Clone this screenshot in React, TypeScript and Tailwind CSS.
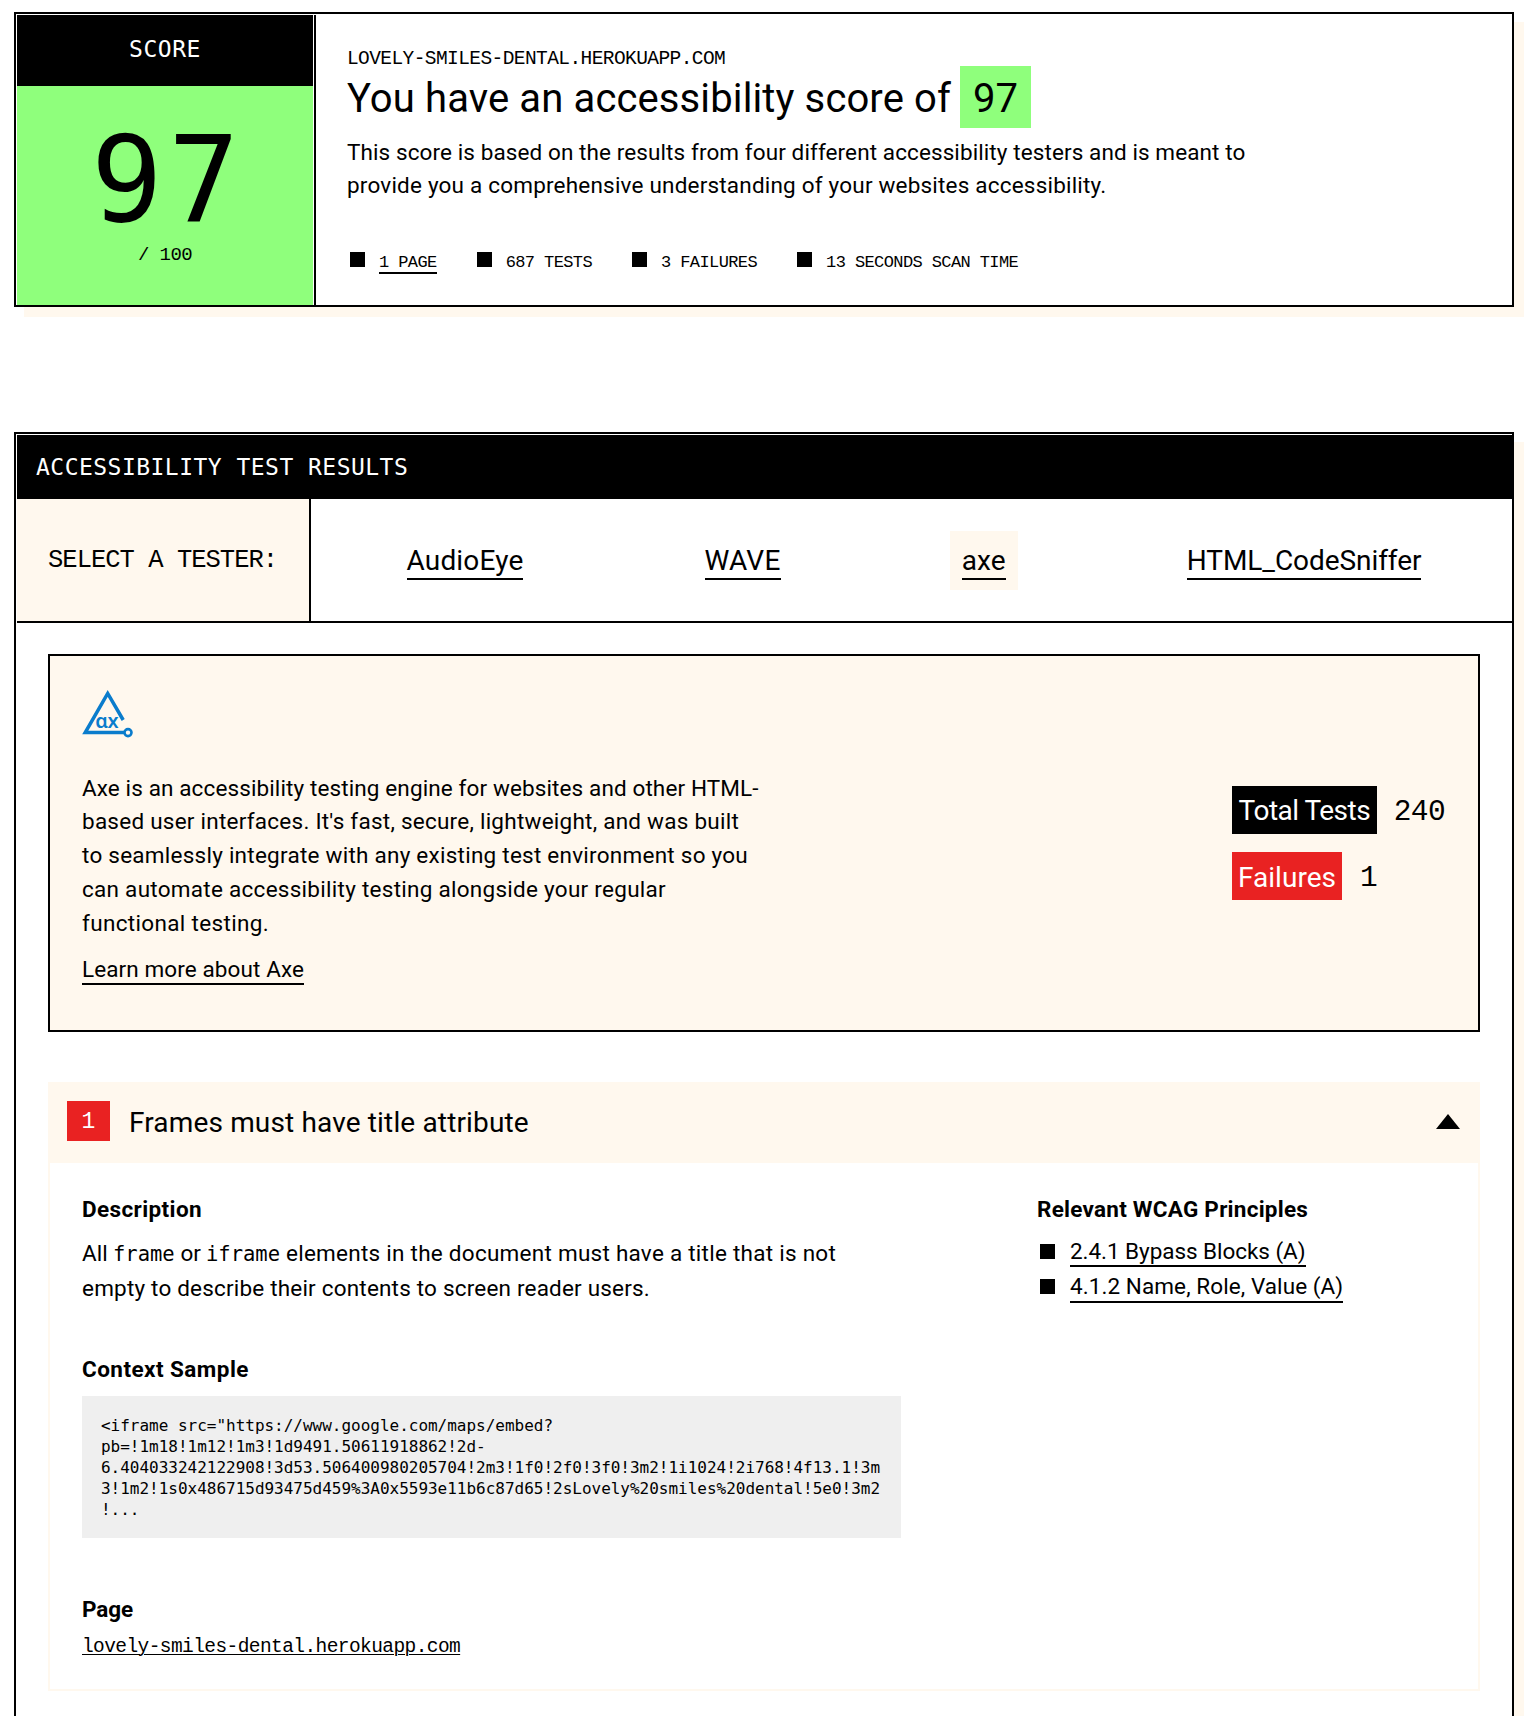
import type { ReactNode } from 'react'

const sans = "font-['Roboto','Liberation_Sans',sans-serif]"
const mono = "font-['Liberation_Mono',monospace]"
const monoStrong = "font-['DejaVu_Sans_Mono',monospace]"

const stats = ['1 PAGE', '687 TESTS', '3 FAILURES', '13 SECONDS SCAN TIME']

const testers = [
  { name: 'AudioEye', cls: 'tracking-[0.15px]' },
  { name: 'WAVE', cls: 'tracking-[0.23px]' },
  { name: 'axe', cls: 'tracking-[0.1px]', active: true },
  { name: 'HTML_CodeSniffer', cls: 'tracking-[-0.07px]' },
]

const about = [
  { text: 'Axe is an accessibility testing engine for websites and other HTML-', cls: 'tracking-[0.12px]' },
  { text: "based user interfaces. It's fast, secure, lightweight, and was built", cls: 'tracking-[0.247px]' },
  { text: 'to seamlessly integrate with any existing test environment so you', cls: 'tracking-[0.25px]' },
  { text: 'can automate accessibility testing alongside your regular', cls: 'tracking-[0.273px]' },
  { text: 'functional testing.', cls: 'tracking-[0.34px]' },
]

const codeLines = [
  '<iframe src="https://www.google.com/maps/embed?',
  'pb=!1m18!1m12!1m3!1d9491.50611918862!2d-',
  '6.404033242122908!3d53.506400980205704!2m3!1f0!2f0!3f0!3m2!1i1024!2i768!4f13.1!3m',
  '3!1m2!1s0x486715d93475d459%3A0x5593e11b6c87d65!2sLovely%20smiles%20dental!5e0!3m2',
  '!...',
]

function AxeLogo() {
  return (
    <svg width="52" height="50" viewBox="0 0 52 50" fill="none" className="block">
      <path d="M41.2 32 25.7 5.4 3.2 44.6H42" stroke="#0a7ccc" strokeWidth="3.5" />
      <circle cx="46" cy="44.6" r="3.5" stroke="#0a7ccc" strokeWidth="2.6" />
      <text x="13.2" y="39.5" fontSize="19.5" fontWeight="600" fontFamily="Noto Sans" fill="#0a7ccc" textLength="23.5" lengthAdjust="spacingAndGlyphs">
        ɑx
      </text>
    </svg>
  )
}

function Heading({ children, className }: { children: ReactNode; className: string }) {
  return <h3 className={`h-[30px] text-[22.5px] leading-[28px] font-bold whitespace-nowrap ${className}`}>{children}</h3>
}

function ScoreCard() {
  return (
    <section className="flex h-[295px] border-2 border-black bg-white shadow-[10px_10px_0_#fff8ee]">
      <div className="mt-px ml-px w-[296px] shrink-0 bg-[#8fff7c] text-center">
        <div className={`h-[71px] bg-black text-[23px] leading-[69px] tracking-[0.55px] text-white ${monoStrong}`}>SCORE</div>
        <div className={`mt-[34px] pl-[6px] text-[119px] leading-[120px] tracking-[5.4px] ${monoStrong}`}>97</div>
        <div className={`mt-[3px] text-[19px] leading-[24px] tracking-[-0.6px] ${mono}`}>/ 100</div>
      </div>
      <div className="mt-px ml-px flex-1 border-l-2 border-black pt-[32px] pl-[31px]">
        <div className={`text-[19.5px] leading-[24px] tracking-[-0.58px] ${mono}`}>LOVELY-SMILES-DENTAL.HEROKUAPP.COM</div>
        <h1 className="-mt-[5px] flex h-[62px] text-[40px] leading-[65px] font-normal">
          <span className="w-[613px] tracking-[0.12px] whitespace-nowrap">You have an accessibility score of</span>
          <span className="w-[71px] bg-[#8fff7c] text-center">97</span>
        </h1>
        <p className="mt-[8px] text-[22.5px] leading-[33px] whitespace-nowrap">
          <span className="block tracking-[0.1px]">
            This score is based on the results from four different accessibility testers and is meant to
          </span>
          <span className="block tracking-[0.2px]">
            provide you a comprehensive understanding of your websites accessibility.
          </span>
        </p>
        <ul className={`mt-[50px] flex items-start gap-[40px] pl-[3px] text-[17px] leading-[21px] tracking-[-0.6px] ${mono}`}>
          {stats.map((s, i) => (
            <li key={s} className="flex items-start gap-[14px]">
              <span className="size-[15px] bg-black" />
              <span className={i === 0 ? 'h-[22px] border-b-2 border-black' : ''}>{s}</span>
            </li>
          ))}
        </ul>
      </div>
    </section>
  )
}

function TesterInfo() {
  return (
    <div className="mx-[32px] mt-[31px] flex h-[378px] justify-between border-2 border-black bg-[#fff8ee] pt-[32px] pr-[33px] pl-[32px]">
      <div>
        <AxeLogo />
        <p className="mt-[33.5px] text-[22.5px] leading-[33.75px] whitespace-nowrap">
          {about.map((l) => (
            <span key={l.text} className={`block ${l.cls}`}>
              {l.text}
            </span>
          ))}
        </p>
        <a className="mt-[13.5px] inline-block h-[31px] border-b-2 border-black text-[22.5px] leading-[31px] tracking-[0.1px]">
          Learn more about Axe
        </a>
      </div>
      <div className="mt-[98px] w-[213px] text-[28px] whitespace-nowrap">
        <div className="flex h-[48px]">
          <span className="w-[145px] bg-black text-center leading-[50px] tracking-[-0.52px] text-white">Total Tests</span>
          <span className={`ml-[17px] text-[29.5px] leading-[52px] tracking-[-0.6px] ${mono}`}>240</span>
        </div>
        <div className="mt-[18px] flex h-[48px]">
          <span className="w-[110px] bg-[#e92222] text-center leading-[51px] tracking-[0.02px] text-white">
            Failures
          </span>
          <span className={`ml-[18px] text-[29.5px] leading-[52px] ${mono}`}>1</span>
        </div>
      </div>
    </div>
  )
}

function Issue() {
  return (
    <div className="mx-[32px] mt-[50px] h-[609px] border-2 border-[#fff8ee]">
      <div className="flex h-[79px] items-start bg-[#fff8ee] pr-[18px] pl-[17px]">
        <span className={`mt-[17px] h-[40px] w-[43px] bg-[#e92222] text-center text-[23px] leading-[42px] text-white ${mono}`}>
          1
        </span>
        <h2 className="ml-[19px] flex-1 text-[28px] leading-[77px] font-normal tracking-[0.15px]">
          Frames must have title attribute
        </h2>
        <svg width="24" height="15" viewBox="0 0 24 15" className="mt-[30px]">
          <path d="M12 0 24 15H0Z" fill="#000" />
        </svg>
      </div>
      <div className="flex pt-[32px] pl-[32px]">
        <div className="w-[955px]">
          <Heading className="tracking-[0.38px]">Description</Heading>
          <p className="mt-[11px] text-[22.5px] leading-[35px] whitespace-nowrap">
            <span className="flex">
              <span className="w-[31px]">All</span>
              <code className={`w-[67.5px] text-[20.5px] leading-[36px] ${monoStrong}`}>frame</code>
              <span className="w-[25.5px]">or</span>
              <code className={`w-[80px] text-[20.5px] leading-[36px] ${monoStrong}`}>iframe</code>
              <span className="tracking-[0.258px]">elements in the document must have a title that is not</span>
            </span>
            <span className="-mt-px block tracking-[0.194px]">empty to describe their contents to screen reader users.</span>
          </p>
          <Heading className="mt-[49px] tracking-[0.45px]">Context Sample</Heading>
          <pre className={`mt-[11px] h-[142px] w-[819px] bg-[#efefef] pt-[19px] pl-[19px] text-[16px] leading-[21px] tracking-[-0.015px] ${monoStrong}`}>
            {codeLines.join('\n')}
          </pre>
          <Heading className="mt-[57px] tracking-[-0.1px]">Page</Heading>
          <a className={`mt-[10px] block text-[19.5px] leading-[24px] tracking-[-0.58px] underline decoration-1 underline-offset-2 ${mono}`}>
            lovely-smiles-dental.herokuapp.com
          </a>
        </div>
        <div>
          <Heading className="tracking-[0.25px]">Relevant WCAG Principles</Heading>
          <ul className="mt-[12px] flex flex-col items-start gap-[6px] pl-[3px] text-[22.5px] whitespace-nowrap">
            <li className="flex gap-[15px]">
              <span className="mt-[7px] size-[15px] bg-black" />
              <a className="h-[30px] border-b-2 border-black leading-[28px] tracking-[-0.05px]">2.4.1 Bypass Blocks (A)</a>
            </li>
            <li className="flex gap-[15px]">
              <span className="mt-[6px] size-[15px] bg-black" />
              <a className="h-[30px] border-b-2 border-black leading-[26px] tracking-[0.08px]">4.1.2 Name, Role, Value (A)</a>
            </li>
          </ul>
        </div>
      </div>
    </div>
  )
}

export default function App() {
  return (
    <main className={`h-[1716px] w-[1530px] overflow-hidden bg-white pt-[12px] pr-[16px] pl-[14px] text-black ${sans}`}>
      <ScoreCard />
      <section className="mt-[125px] h-[1400px] border-2 border-black bg-white shadow-[10px_10px_0_#fff8ee]">
        <h2 className={`mt-px ml-px h-[64px] bg-black pl-[19px] text-[23px] leading-[64px] font-normal tracking-[0.47px] text-white ${monoStrong}`}>
          ACCESSIBILITY TEST RESULTS
        </h2>
        <div className="ml-px flex h-[124px] border-b-2 border-black">
          <div className={`w-[294px] shrink-0 border-r-2 border-black bg-[#fff8ee] pl-[31px] text-[25.5px] leading-[124px] tracking-[-0.98px] whitespace-nowrap ${mono}`}>
            SELECT A TESTER:
          </div>
          <nav className="flex flex-1 items-center justify-around pt-px pl-[5px] text-[28px] leading-[38px]">
            {testers.map((t) => (
              <a key={t.name} className={`px-[12px] pt-[11px] pb-[10px] ${t.active ? 'bg-[#fff8ee]' : ''}`}>
                <span className={`block h-[38px] border-b-2 border-black ${t.cls}`}>{t.name}</span>
              </a>
            ))}
          </nav>
        </div>
        <TesterInfo />
        <Issue />
      </section>
    </main>
  )
}
